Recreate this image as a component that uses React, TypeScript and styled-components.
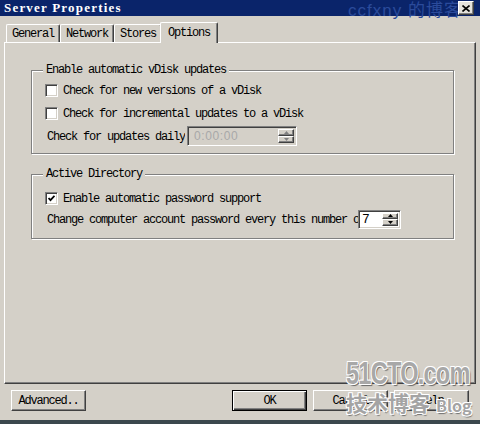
import React from "react";
import styled, { createGlobalStyle } from "styled-components";

const GlobalStyle = createGlobalStyle`
  html, body { margin: 0; padding: 0; background: #d4d0c8; }
  body { font-family: "Liberation Mono", monospace; }
`;

const Window = styled.div`
  width: 480px;
  height: 424px;
  box-sizing: border-box;
  background: #d4d0c8;
  display: flex;
  flex-direction: column;
  position: relative;
  overflow: hidden;
  border-bottom: 4px solid #3b484d;
  font-family: "Liberation Mono", monospace;
  font-size: 12px;
  letter-spacing: -1.2px;
  color: #000;
`;

const TitleBar = styled.div`
  height: 16px;
  flex: none;
  background: #0a246a;
  display: flex;
  align-items: center;
  padding: 0 6px 0 4px;
  position: relative;
`;

const TitleText = styled.span`
  flex: 1;
  color: #fff;
  font-family: "Liberation Serif", serif;
  font-weight: bold;
  font-size: 13px;
  letter-spacing: 1.2px;
  white-space: nowrap;
`;

const TitleWatermark = styled.span`
  position: absolute;
  left: 348px;
  top: -4px;
  font-family: "Liberation Sans", "Noto Sans CJK SC", sans-serif;
  font-size: 17px;
  letter-spacing: 1px;
  color: #2b4b9b;
  white-space: nowrap;
`;

const CloseButton = styled.div`
  position: relative;
  width: 16px;
  height: 14px;
  box-sizing: border-box;
  background: #e4e2dc;
  border: 1px solid;
  border-color: #fff #404040 #404040 #fff;
  box-shadow: inset -1px -1px #808080;
  display: flex;
  align-items: center;
  justify-content: center;
`;

const TabStrip = styled.div`
  margin-top: 6px;
  height: 20px;
  flex: none;
  padding-left: 6px;
  display: flex;
  align-items: flex-end;
  position: relative;
  z-index: 1;
`;

const Tab = styled.div<{ $active?: boolean }>`
  height: ${(p) => (p.$active ? 21 : 18)}px;
  margin: ${(p) => (p.$active ? "0 0 -1px -2px" : "0")};
  padding: 0 ${(p) => (p.$active ? 7 : 5)}px;
  box-sizing: border-box;
  background: #d4d0c8;
  border-style: solid;
  border-width: 1px 1px 0 1px;
  border-color: #fff #404040 #fff #fff;
  border-radius: 2px 2px 0 0;
  box-shadow: inset -1px 0 #808080;
  display: flex;
  align-items: ${(p) => (p.$active ? "flex-start" : "center")};
  padding-top: ${(p) => (p.$active ? 3 : 0)}px;
  white-space: nowrap;
`;

const Panel = styled.div`
  margin: 0 4px;
  height: 342px;
  flex: none;
  box-sizing: border-box;
  border: 1px solid;
  border-color: #fff #404040 #404040 #fff;
  box-shadow: inset -1px -1px #808080;
  padding: 27px 21px 0 26px;
  display: flex;
  flex-direction: column;
`;

const GroupBox = styled.div<{ $pb: number; $mt?: number }>`
  border: 1px solid #808080;
  box-shadow: 1px 1px 0 #fff, inset 1px 1px 0 #fff;
  margin-top: ${(p) => p.$mt ?? 0}px;
  padding: 0 0 ${(p) => p.$pb}px 13px;
  display: flex;
  flex-direction: column;
`;

const Legend = styled.div<{ $after: number }>`
  align-self: flex-start;
  margin: -7px 0 ${(p) => p.$after}px -2px;
  padding: 0 3px;
  height: 12px;
  line-height: 12px;
  background: #d4d0c8;
  white-space: nowrap;
`;

const Row = styled.div<{ $gap?: number }>`
  height: 20px;
  display: flex;
  align-items: center;
  margin-top: ${(p) => p.$gap ?? 0}px;
`;

const CheckBox = styled.div`
  width: 13px;
  height: 13px;
  flex: none;
  box-sizing: border-box;
  background: #fff;
  border: 1px solid;
  border-color: #808080 #fff #fff #808080;
  box-shadow: inset 1px 1px #404040, inset -1px -1px #d4d0c8;
  display: flex;
  align-items: center;
  justify-content: center;
`;

const CheckLabel = styled.span`
  margin-left: 5px;
  padding-top: 1px;
  white-space: nowrap;
`;

const FieldLabel = styled.span<{ $w?: number }>`
  margin-left: 2px;
  padding-top: 1px;
  white-space: nowrap;
  overflow: hidden;
  ${(p) => (p.$w ? `width: ${p.$w}px; flex: none;` : "")}
`;

const SpinInput = styled.div<{ $w: number; $h: number; $disabled?: boolean }>`
  width: ${(p) => p.$w}px;
  height: ${(p) => p.$h}px;
  flex: none;
  box-sizing: border-box;
  margin-left: ${(p) => (p.$disabled ? 2 : 0)}px;
  background: ${(p) => (p.$disabled ? "#d4d0c8" : "#fff")};
  border: 1px solid;
  border-color: #808080 #fff #fff #808080;
  box-shadow: inset 1px 1px #404040, inset -1px -1px #d4d0c8;
  padding: 2px 2px 2px 3px;
  display: flex;
  align-items: stretch;
`;

const SpinValue = styled.span<{ $disabled?: boolean }>`
  flex: 1;
  display: flex;
  align-items: center;
  padding-left: ${(p) => (p.$disabled ? 3 : 0)}px;
  font-family: ${(p) =>
    p.$disabled ? '"Liberation Sans", sans-serif' : '"Liberation Mono", monospace'};
  font-size: ${(p) => (p.$disabled ? 12 : 13)}px;
  letter-spacing: ${(p) => (p.$disabled ? "0.6px" : "0")};
  color: ${(p) => (p.$disabled ? "#a8a8a8" : "#000")};
`;

const SpinButtons = styled.div`
  width: 16px;
  flex: none;
  display: flex;
  flex-direction: column;
`;

const SpinButton = styled.div`
  flex: 1;
  box-sizing: border-box;
  background: #d4d0c8;
  border: 1px solid;
  border-color: #fff #404040 #404040 #fff;
  box-shadow: inset -1px -1px #808080;
  display: flex;
  align-items: center;
  justify-content: center;
`;

const ButtonBar = styled.div`
  margin-top: 6px;
  padding: 0 11px;
  display: flex;
  gap: 6px;
`;

const Spacer = styled.div`
  flex: 1;
`;

const Button = styled.div<{ $default?: boolean }>`
  width: 75px;
  height: 21px;
  box-sizing: border-box;
  background: #d4d0c8;
  border: 1px solid;
  border-color: ${(p) => (p.$default ? "#000" : "#fff #404040 #404040 #fff")};
  box-shadow: ${(p) =>
    p.$default
      ? "inset 1px 1px #fff, inset -1px -1px #404040, inset -2px -2px #808080"
      : "inset -1px -1px #808080"};
  display: flex;
  align-items: center;
  justify-content: center;
  white-space: nowrap;
`;

const Watermark = styled.div`
  position: absolute;
  left: 346px;
  top: 359px;
  display: flex;
  flex-direction: column;
  align-items: flex-start;
  pointer-events: none;
`;

const WatermarkBig = styled.span`
  display: inline-block;
  font-family: "Liberation Sans Narrow", "Liberation Sans", sans-serif;
  font-weight: bold;
  font-size: 31px;
  line-height: 30px;
  letter-spacing: -1px;
  color: #a8a8a8;
  transform: scaleX(0.76);
  transform-origin: left center;
  text-shadow: -1px -1px 0 #fff, 1px -1px 0 #fff, -1px 1px 0 #fff, 1px 1px 0 #fff,
    2px 2px 1px #6a6a6a;
`;

const WatermarkLine = styled.div`
  display: flex;
  align-items: flex-end;
  gap: 6px;
  margin-top: 1px;
`;

const WatermarkCJK = styled.span<{ $size: number }>`
  font-family: "Noto Sans CJK SC", "Liberation Sans", sans-serif;
  font-weight: bold;
  font-size: ${(p) => p.$size}px;
  line-height: ${(p) => p.$size + 4}px;
  letter-spacing: 0;
  color: #a4a4a4;
  text-shadow: -1px -1px 0 #fff, 1px -1px 0 #fff, -1px 1px 0 #fff, 1px 1px 0 #fff,
    1px 2px 1px #707070;
`;

const Arrow = ({ up, color }: { up?: boolean; color: string }) => (
  <svg width="5" height="3" viewBox="0 0 5 3">
    <path d={up ? "M2.5 0 L5 3 L0 3 Z" : "M0 0 L5 0 L2.5 3 Z"} fill={color} />
  </svg>
);

const Spinner = ({
  w,
  h,
  value,
  disabled,
}: {
  w: number;
  h: number;
  value: string;
  disabled?: boolean;
}) => (
  <SpinInput $w={w} $h={h} $disabled={disabled}>
    <SpinValue $disabled={disabled}>{value}</SpinValue>
    <SpinButtons>
      <SpinButton>
        <Arrow up color={disabled ? "#808080" : "#000"} />
      </SpinButton>
      <SpinButton>
        <Arrow color={disabled ? "#808080" : "#000"} />
      </SpinButton>
    </SpinButtons>
  </SpinInput>
);

export default function App() {
  return (
    <>
      <GlobalStyle />
      <Window>
        <TitleBar>
          <TitleText>Server Properties</TitleText>
          <TitleWatermark>ccfxny 的博客</TitleWatermark>
          <CloseButton>
            <svg width="8" height="7" viewBox="0 0 8 7">
              <path d="M0.5 0.5 L7.5 6.5 M7.5 0.5 L0.5 6.5" stroke="#000" strokeWidth="1.6" />
            </svg>
          </CloseButton>
        </TitleBar>

        <TabStrip>
          <Tab>General</Tab>
          <Tab>Network</Tab>
          <Tab>Stores</Tab>
          <Tab $active>Options</Tab>
        </TabStrip>

        <Panel>
          <GroupBox $pb={7}>
            <Legend $after={4}>Enable automatic vDisk updates</Legend>
            <Row>
              <CheckBox />
              <CheckLabel>Check for new versions of a vDisk</CheckLabel>
            </Row>
            <Row $gap={3}>
              <CheckBox />
              <CheckLabel>Check for incremental updates to a vDisk</CheckLabel>
            </Row>
            <Row $gap={3}>
              <FieldLabel>Check for updates daily</FieldLabel>
              <Spinner w={110} h={20} value="0:00:00" disabled />
            </Row>
          </GroupBox>

          <GroupBox $pb={9} $mt={20}>
            <Legend $after={8}>Active Directory</Legend>
            <Row>
              <CheckBox>
                <svg width="7" height="7" viewBox="0 0 7 7">
                  <path d="M0.5 3 L2.5 5.2 L6.5 0.8" stroke="#000" strokeWidth="1.8" fill="none" />
                </svg>
              </CheckBox>
              <CheckLabel>Enable automatic password support</CheckLabel>
            </Row>
            <Row $gap={1}>
              <FieldLabel $w={311}>
                Change computer account password every this number of days
              </FieldLabel>
              <Spinner w={43} h={19} value="7" />
            </Row>
          </GroupBox>
        </Panel>

        <ButtonBar>
          <Button>Advanced..</Button>
          <Spacer />
          <Button $default>OK</Button>
          <Button>Cancel</Button>
          <Button>Help</Button>
        </ButtonBar>

        <Watermark>
          <WatermarkBig>51CTO.com</WatermarkBig>
          <WatermarkLine>
            <WatermarkCJK $size={21}>技术博客</WatermarkCJK>
            <WatermarkCJK $size={16}>Blog</WatermarkCJK>
          </WatermarkLine>
        </Watermark>
      </Window>
    </>
  );
}
